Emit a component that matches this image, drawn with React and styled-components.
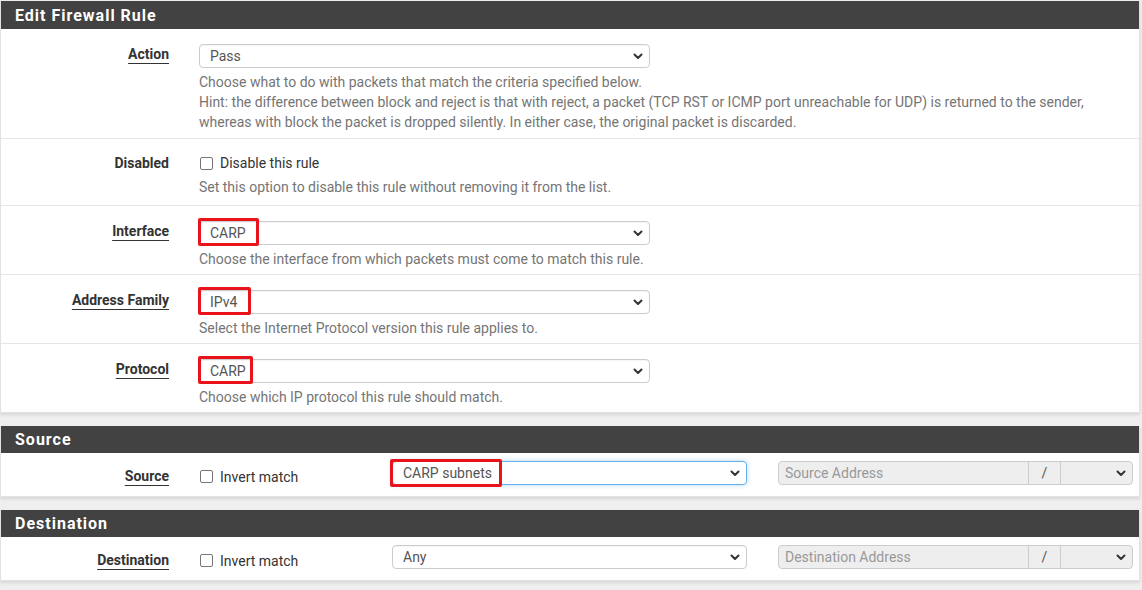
import React from "react";
import styled, { createGlobalStyle } from "styled-components";

const GlobalStyle = createGlobalStyle`
  html, body { margin: 0; padding: 0; }
  body {
    background: #efefef;
    font-family: Roboto, "Liberation Sans", Arial, sans-serif;
    color: #333;
  }
`;

const Page = styled.div`
  width: 1140px;
  padding-bottom: 10px;
`;

const Panel = styled.section`
  background: #fff;
  border: 1px solid #e2e2e2;
  border-top-color: #ececec;
  box-shadow: 0 2px 3px rgba(0, 0, 0, 0.1);
  margin-bottom: 12px;
`;

const PanelHeading = styled.h2`
  margin: 0;
  height: ${(p) => p.$h || 28}px;
  display: flex;
  align-items: center;
  padding: 0 14px;
  background: #424242;
  color: #fff;
  font-size: 16px;
  font-weight: 700;
  letter-spacing: 1px;
`;

const Row = styled.div`
  display: grid;
  grid-template-columns: 183px 1fr;
  align-items: start;
  padding: ${(p) => p.$pad || "15px 0 5px"};
  border-bottom: 1px solid #e6e6e6;
  &:last-child { border-bottom: none; }
`;

const Label = styled.div`
  text-align: right;
  padding-right: 15px;
  padding-top: ${(p) => p.$top || "0px"};
  font-size: 14px;
  line-height: ${(p) => p.$lh || 20}px;
  font-weight: 700;
  color: #333;
  span {
    text-decoration: ${(p) => (p.$underline ? "underline" : "none")};
    text-underline-offset: 4px;
    text-decoration-thickness: 1px;
  }
`;

const Content = styled.div`
  padding-left: 15px;
  display: flex;
  flex-direction: column;
`;

const InlineContent = styled.div`
  padding-left: 15px;
  display: flex;
  align-items: flex-start;
`;

const SelectWrap = styled.div`
  position: relative;
  width: ${(p) => p.$w || 451}px;
`;

const SelectBox = styled.div`
  box-sizing: border-box;
  height: 24px;
  width: 100%;
  display: flex;
  align-items: center;
  justify-content: space-between;
  padding: 0 6px 0 10px;
  border: 1px solid ${(p) => (p.$focus ? "#66afe9" : "#cccccc")};
  border-radius: 4px;
  background: #fff;
  box-shadow: ${(p) =>
    p.$focus ? "0 0 5px rgba(102,175,233,0.5)" : "inset 0 1px 1px rgba(0,0,0,0.04)"};
  font-size: 14px;
  color: #555;
`;

const Chevron = () => (
  <svg width="10" height="7" viewBox="0 0 10 7">
    <path d="M1.5 1.5 L5 5 L8.5 1.5" fill="none" stroke="#333" strokeWidth="2" strokeLinecap="round" strokeLinejoin="round" />
  </svg>
);

const Highlight = styled.div`
  position: absolute;
  left: ${(p) => p.$l}px;
  top: ${(p) => p.$t}px;
  width: ${(p) => p.$w}px;
  height: ${(p) => p.$h}px;
  border: 3px solid #e8131b;
  border-radius: 2px;
  box-sizing: border-box;
  pointer-events: none;
`;

const Help = styled.div`
  margin-top: 4px;
  font-size: 14px;
  line-height: 20px;
  color: #757575;
  div { white-space: nowrap; }
`;

const CheckLine = styled.label`
  display: flex;
  align-items: center;
  gap: 7px;
  height: ${(p) => p.$h || 19}px;
  margin-top: ${(p) => p.$mt || 0}px;
  font-size: 14px;
  color: #333;
`;

const CheckBox = styled.span`
  width: 11px;
  height: 11px;
  border: 1px solid #767676;
  border-radius: 2px;
  background: #fff;
  margin-left: 1px;
  flex: none;
`;

const CheckCol = styled.div`
  width: 193px;
  flex: none;
`;

const AddrGroup = styled.div`
  margin-left: 31px;
  width: 355px;
  height: 24px;
  display: flex;
  box-sizing: border-box;
  border: 1px solid #cccccc;
  border-radius: 4px;
  background: #eeeeee;
  font-size: 14px;
  overflow: hidden;
`;

const AddrInput = styled.div`
  flex: 0 0 250px;
  display: flex;
  align-items: center;
  padding-left: 6px;
  color: #999;
  box-sizing: border-box;
  border-right: 1px solid #cccccc;
`;

const Slash = styled.div`
  flex: 0 0 32px;
  display: flex;
  align-items: center;
  justify-content: center;
  color: #555;
  border-right: 1px solid #cccccc;
  box-sizing: border-box;
`;

const MaskSelect = styled.div`
  flex: 1;
  display: flex;
  align-items: center;
  justify-content: flex-end;
  padding-right: 6px;
`;

function Select({ value, width, focus, hl }) {
  return (
    <SelectWrap $w={width}>
      <SelectBox $focus={focus}>
        <span>{value}</span>
        <Chevron />
      </SelectBox>
      {hl && <Highlight $l={hl[0]} $t={hl[1]} $w={hl[2]} $h={hl[3]} />}
    </SelectWrap>
  );
}

function AddressField({ placeholder }) {
  return (
    <AddrGroup>
      <AddrInput>{placeholder}</AddrInput>
      <Slash>/</Slash>
      <MaskSelect>
        <Chevron />
      </MaskSelect>
    </AddrGroup>
  );
}

export default function App() {
  return (
    <Page>
      <GlobalStyle />
      <Panel>
        <PanelHeading>Edit Firewall Rule</PanelHeading>
        <Row $pad="15px 0 6px">
          <Label $underline><span>Action</span></Label>
          <Content>
            <Select value="Pass" />
            <Help>
              <div>Choose what to do with packets that match the criteria specified below.</div>
              <div>Hint: the difference between block and reject is that with reject, a packet (TCP RST or ICMP port unreachable for UDP) is returned to the sender,</div>
              <div>whereas with block the packet is dropped silently. In either case, the original packet is discarded.</div>
            </Help>
          </Content>
        </Row>
        <Row $pad="14px 0 8px">
          <Label><span>Disabled</span></Label>
          <Content>
            <CheckLine $h={20}>
              <CheckBox />
              Disable this rule
            </CheckLine>
            <Help>Set this option to disable this rule without removing it from the list.</Help>
          </Content>
        </Row>
        <Row>
          <Label $underline><span>Interface</span></Label>
          <Content>
            <Select value="CARP" hl={[-1, -3, 61, 28]} />
            <Help>Choose the interface from which packets must come to match this rule.</Help>
          </Content>
        </Row>
        <Row>
          <Label $underline><span>Address Family</span></Label>
          <Content>
            <Select value="IPv4" hl={[-1, -3, 53, 28]} />
            <Help>Select the Internet Protocol version this rule applies to.</Help>
          </Content>
        </Row>
        <Row>
          <Label $underline><span>Protocol</span></Label>
          <Content>
            <Select value="CARP" hl={[-1, -3, 55, 28]} />
            <Help>Choose which IP protocol this rule should match.</Help>
          </Content>
        </Row>
      </Panel>

      <Panel>
        <PanelHeading $h={27}>Source</PanelHeading>
        <Row $pad="8px 0 11px">
          <Label $underline $top="7px" $lh={17}><span>Source</span></Label>
          <InlineContent>
            <CheckCol>
              <CheckLine $h={17} $mt={7}>
                <CheckBox />
                Invert match
              </CheckLine>
            </CheckCol>
            <Select value="CARP subnets" width={355} focus hl={[-2, -2, 112, 28]} />
            <AddressField placeholder="Source Address" />
          </InlineContent>
        </Row>
      </Panel>

      <Panel>
        <PanelHeading $h={27}>Destination</PanelHeading>
        <Row $pad="8px 0 11px">
          <Label $underline $top="7px" $lh={17}><span>Destination</span></Label>
          <InlineContent>
            <CheckCol>
              <CheckLine $h={17} $mt={7}>
                <CheckBox />
                Invert match
              </CheckLine>
            </CheckCol>
            <Select value="Any" width={355} />
            <AddressField placeholder="Destination Address" />
          </InlineContent>
        </Row>
      </Panel>
    </Page>
  );
}
